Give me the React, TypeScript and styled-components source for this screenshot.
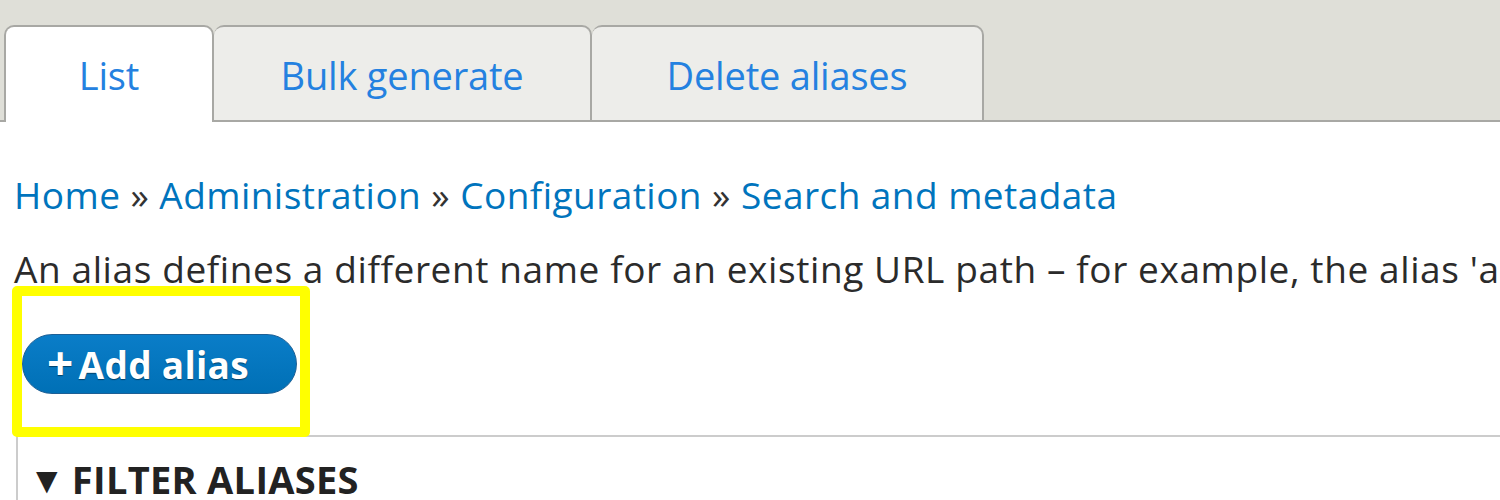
import styled, { createGlobalStyle } from 'styled-components';

const tabs = [
  { label: 'List', width: 210 },
  { label: 'Bulk generate', width: 378 },
  { label: 'Delete aliases', width: 392 },
];

const crumbs = ['Home', 'Administration', 'Configuration', 'Search and metadata'];

const GlobalStyle = createGlobalStyle`
  html, body {
    margin: 0;
    padding: 0;
    background: #fff;
    overflow: hidden;
  }
  body {
    font-family: "Open Sans", "Noto Sans", "DejaVu Sans", sans-serif;
    color: #333;
  }
`;

const App = () => {
  return (
    <Page>
      <GlobalStyle />
      <TabBar>
        {tabs.map((tab, i) => (
          <Tab key={tab.label} $active={i === 0} $width={tab.width}>
            {tab.label}
          </Tab>
        ))}
      </TabBar>

      <Content>
        <Breadcrumb>
          {crumbs.map((crumb, i) => (
            <span key={crumb}>
              <CrumbLink href="#">{crumb}</CrumbLink>
              {i < crumbs.length - 1 && <Sep> » </Sep>}
            </span>
          ))}
        </Breadcrumb>

        <Description>
          An alias defines a different name for an existing URL path – for example, the alias 'about' for the URL path 'node/1'. A URL path can have multiple aliases.
        </Description>

        <ActionArea>
          <AddButton>
            <Plus>+</Plus>Add alias
          </AddButton>
          <Highlight />
        </ActionArea>

        <FilterFieldset>
          <Legend>
            <Arrow>▼</Arrow>
            FILTER ALIASES
          </Legend>
        </FilterFieldset>
      </Content>
    </Page>
  );
};

export default App;

const Page = styled.div`
  width: 1500px;
  height: 500px;
  overflow: hidden;
`;

const TabBar = styled.div`
  display: flex;
  align-items: flex-end;
  height: 120px;
  padding-left: 4px;
  background-color: #dfdfd8;
  border-bottom: 2px solid #a8a8a4;
`;

const Tab = styled.a<{ $active: boolean; $width: number }>`
  display: flex;
  align-items: center;
  justify-content: center;
  box-sizing: border-box;
  width: ${(p) => p.$width}px;
  height: ${(p) => (p.$active ? '97px' : '95px')};
  margin-bottom: ${(p) => (p.$active ? '-2px' : '0')};
  padding-bottom: ${(p) => (p.$active ? '2px' : '0')};
  padding-top: 2px;
  background-color: ${(p) => (p.$active ? '#fff' : '#ededea')};
  border: 2px solid #a8a8a4;
  border-bottom: none;
  border-left-width: ${(p) => (p.$active ? '2px' : '0')};
  border-radius: 10px 10px 0 0;
  color: #2481e0;
  font-size: 38px;
  letter-spacing: -0.2px;
  text-decoration: none;
  cursor: pointer;
`;

const Content = styled.div`
  padding: 48px 0 0 14px;
`;

const Breadcrumb = styled.nav`
  font-size: 37px;
  line-height: 50px;
  letter-spacing: 0.45px;
  white-space: nowrap;
`;

const CrumbLink = styled.a`
  color: #0074bd;
  text-decoration: none;
`;

const Sep = styled.span`
  color: #333;
`;

const Description = styled.p`
  margin: 24px 0 0;
  font-size: 37px;
  line-height: 50px;
  letter-spacing: 0.6px;
  color: #2b2b2b;
  white-space: nowrap;
`;

const ActionArea = styled.div`
  position: relative;
  height: 141px;
  display: flex;
  align-items: center;
  padding-left: 8px;
`;

const AddButton = styled.button`
  display: flex;
  align-items: center;
  box-sizing: border-box;
  height: 60px;
  width: 275px;
  margin-top: -1px;
  padding: 0 0 0 24px;
  border: 1px solid #1d5f95;
  border-radius: 30px;
  background: linear-gradient(#0a7dc8, #0070b6);
  color: #fff;
  font-family: "Open Sans", "DejaVu Sans", sans-serif;
  font-size: 37px;
  font-weight: 700;
  letter-spacing: 0.3px;
  text-shadow: 0 1px 1px rgba(0, 0, 0, 0.45);
  cursor: pointer;
`;

const Plus = styled.span`
  margin-right: 5px;
  font-size: 46px;
  line-height: 1;
  margin-top: -4px;
`;

const Highlight = styled.div`
  position: absolute;
  left: -2px;
  top: -8px;
  width: 298px;
  height: 151px;
  box-sizing: border-box;
  border: 10px solid #ffff00;
  border-radius: 5px;
  pointer-events: none;
  z-index: 2;
`;

const FilterFieldset = styled.fieldset`
  margin: 0 0 0 2px;
  padding: 0;
  height: 100px;
  border: none;
  border-top: 2px solid #cccccc;
  border-left: 2px solid #cccccc;
`;

const Legend = styled.div`
  display: flex;
  align-items: center;
  padding: 16px 0 0 18px;
  font-size: 38px;
  line-height: 52px;
  font-weight: 700;
  color: #222;
  letter-spacing: 0.3px;
`;

const Arrow = styled.span`
  font-size: 28px;
  margin-right: 14px;
`;
